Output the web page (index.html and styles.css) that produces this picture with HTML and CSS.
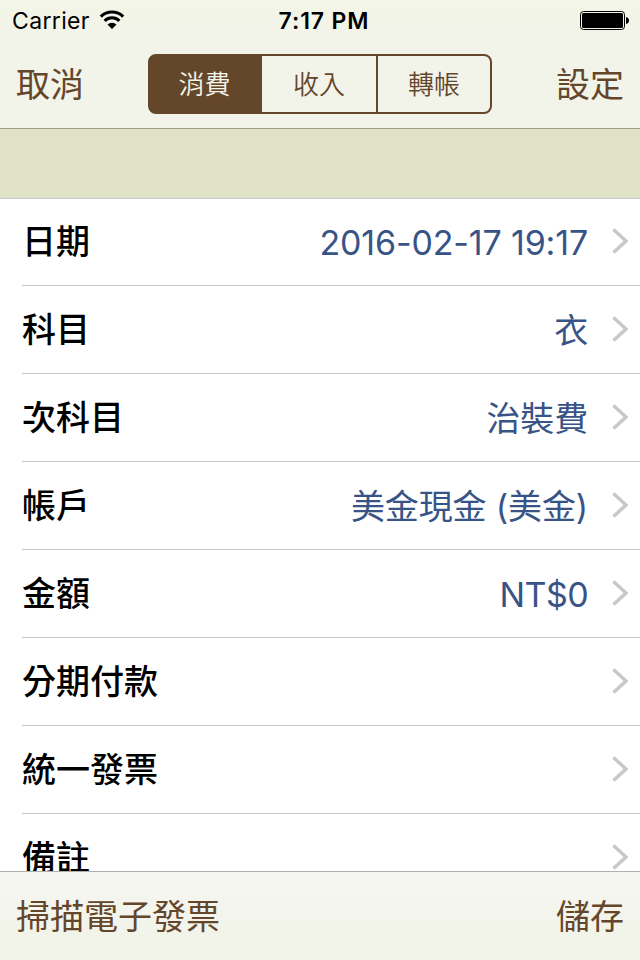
FILE: index.html
```html
<!DOCTYPE html>
<html lang="zh-Hant">
<head>
    <meta charset="UTF-8">
    <meta name="viewport" content="width=device-width, initial-scale=1.0">
    <title>消費</title>
    <link rel="stylesheet" href="styles.css">
</head>
<body>
    <header class="header">
        <div class="status-bar">
            <div class="carrier">
                <span>Carrier</span>
                <svg class="wifi" width="26" height="20" viewBox="0 0 26 20">
                    <path d="M1.800 6.600a16 16 0 0 1 22.400 0M5.600 10.900a10.500 10.500 0 0 1 14.800 0" fill="none" stroke="#000" stroke-width="3"/>
                    <path d="M8.500 14.500a6.400 6.400 0 0 1 9 0L13 19z"/>
                </svg>
            </div>
            <div class="clock">7:17 PM</div>
            <svg class="battery" width="49" height="19" viewBox="0 0 49 19">
                <rect x="0.5" y="0.5" width="44" height="18" rx="3" fill="none" stroke="#000"/>
                <rect x="2" y="2" width="41" height="15" rx="1.500"/>
                <path d="M46 6c4 .8 4 6.200 0 7z"/>
            </svg>
        </div>
        <nav class="nav-bar">
            <a class="bar-button">取消</a>
            <div class="segmented">
                <div class="segment selected">消費</div>
                <div class="segment">收入</div>
                <div class="segment">轉帳</div>
            </div>
            <a class="bar-button">設定</a>
        </nav>
    </header>

    <main class="content">
        <div class="section-header"></div>
        <ul class="list">
            <li class="row">
                <span class="label">日期</span>
                <span class="value latin">2016-02-17 19:17</span>
                <svg class="chevron" viewBox="0 0 16 26"><path d="M1.500 1.500L14 13L1.500 24.500"/></svg>
            </li>
            <li class="row">
                <span class="label">科目</span>
                <span class="value">衣</span>
                <svg class="chevron" viewBox="0 0 16 26"><path d="M1.500 1.500L14 13L1.500 24.500"/></svg>
            </li>
            <li class="row">
                <span class="label">次科目</span>
                <span class="value">治裝費</span>
                <svg class="chevron" viewBox="0 0 16 26"><path d="M1.500 1.500L14 13L1.500 24.500"/></svg>
            </li>
            <li class="row">
                <span class="label">帳戶</span>
                <span class="value">美金現金 (美金)</span>
                <svg class="chevron" viewBox="0 0 16 26"><path d="M1.500 1.500L14 13L1.500 24.500"/></svg>
            </li>
            <li class="row">
                <span class="label">金額</span>
                <span class="value latin amount">NT$0</span>
                <svg class="chevron" viewBox="0 0 16 26"><path d="M1.500 1.500L14 13L1.500 24.500"/></svg>
            </li>
            <li class="row">
                <span class="label">分期付款</span>
                <svg class="chevron" viewBox="0 0 16 26"><path d="M1.500 1.500L14 13L1.500 24.500"/></svg>
            </li>
            <li class="row">
                <span class="label">統一發票</span>
                <svg class="chevron" viewBox="0 0 16 26"><path d="M1.500 1.500L14 13L1.500 24.500"/></svg>
            </li>
            <li class="row">
                <span class="label">備註</span>
                <svg class="chevron" viewBox="0 0 16 26"><path d="M1.500 1.500L14 13L1.500 24.500"/></svg>
            </li>
        </ul>
    </main>

    <footer class="toolbar">
        <a class="bar-button">掃描電子發票</a>
        <a class="bar-button">儲存</a>
    </footer>
</body>
</html>
```
FILE: styles.css
```css
* {
    box-sizing: border-box;
}
body {
    margin: 0;
    height: 960px;
    display: flex;
    flex-direction: column;
    overflow: hidden;
    font-family: Inter, "Noto Sans CJK TC", sans-serif;
    background-color: #fff;
    color: #000;
}

/* Status bar and navigation */
.header {
    height: 129px;
    flex: none;
    background: linear-gradient(#f3f5e6, #f2f4ea 40px);
    border-bottom: 1px solid #9fa18c;
}
.status-bar {
    height: 40px;
    display: grid;
    grid-template-columns: 1fr auto 1fr;
    align-items: center;
    padding: 1px 11px 0 12px;
    font-size: 23px;
    line-height: 28px;
}
.carrier {
    display: flex;
    align-items: center;
    gap: 9px;
    letter-spacing: 0.35px;
}
.wifi {
    margin-top: -1px;
}
.clock {
    font-weight: 600;
    letter-spacing: 0.9px;
    margin-left: 7px;
}
.battery {
    justify-self: end;
}
.nav-bar {
    height: 88px;
    display: flex;
    align-items: center;
    justify-content: space-between;
    padding: 0 16px;
}
.bar-button {
    color: #64462b;
    font-size: 34px;
    line-height: 44px;
    padding-top: 2px;
}
.segmented {
    width: 344px;
    height: 60px;
    display: grid;
    grid-template-columns: 112px 114px 114px;
    border: 2px solid #64462b;
    border-radius: 8px;
}
.segment {
    display: flex;
    align-items: center;
    justify-content: center;
    padding-bottom: 4px;
    color: #64462b;
    font-size: 26px;
    font-weight: 350;
}
.segment:last-child {
    border-left: 2px solid #64462b;
}
.segment.selected {
    padding-right: 3px;
    background-color: #64462b;
    color: #f3f5e9;
    border-radius: 5px 0 0 5px;
    box-shadow: -1px 0 0 #64462b;
}

/* Table of fields */
.content {
    flex: 1;
    min-height: 0;
    overflow: hidden;
}
.section-header {
    height: 70px;
    background-color: #dfe2c6;
    border-bottom: 1px solid #c8c7cc;
}
.list {
    list-style: none;
    margin: -1px 0 0;
    padding: 0;
}
.row {
    height: 88px;
    margin-left: 22px;
    padding: 0 12px 2px 0;
    display: flex;
    align-items: center;
    border-bottom: 1px solid #c8c7cc;
}
.label {
    font-size: 34px;
    font-weight: 500;
    margin-right: auto;
    padding-bottom: 2px;
}
.value {
    color: #385487;
    font-size: 34px;
    letter-spacing: -0.15px;
    margin-right: 24px;
}
.value.latin {
    padding-top: 3px;
}
.value.amount {
    letter-spacing: -0.6px;
}
.chevron {
    width: 16px;
    height: 26px;
    fill: none;
    stroke: #c7c7cc;
    stroke-width: 3.5;
}

/* Bottom toolbar */
.toolbar {
    height: 89px;
    flex: none;
    display: flex;
    align-items: center;
    justify-content: space-between;
    padding: 0 16px;
    background: linear-gradient(#f6f7f2, #f2f3e9 60px);
    border-top: 1px solid #b0b0ab;
}
```
